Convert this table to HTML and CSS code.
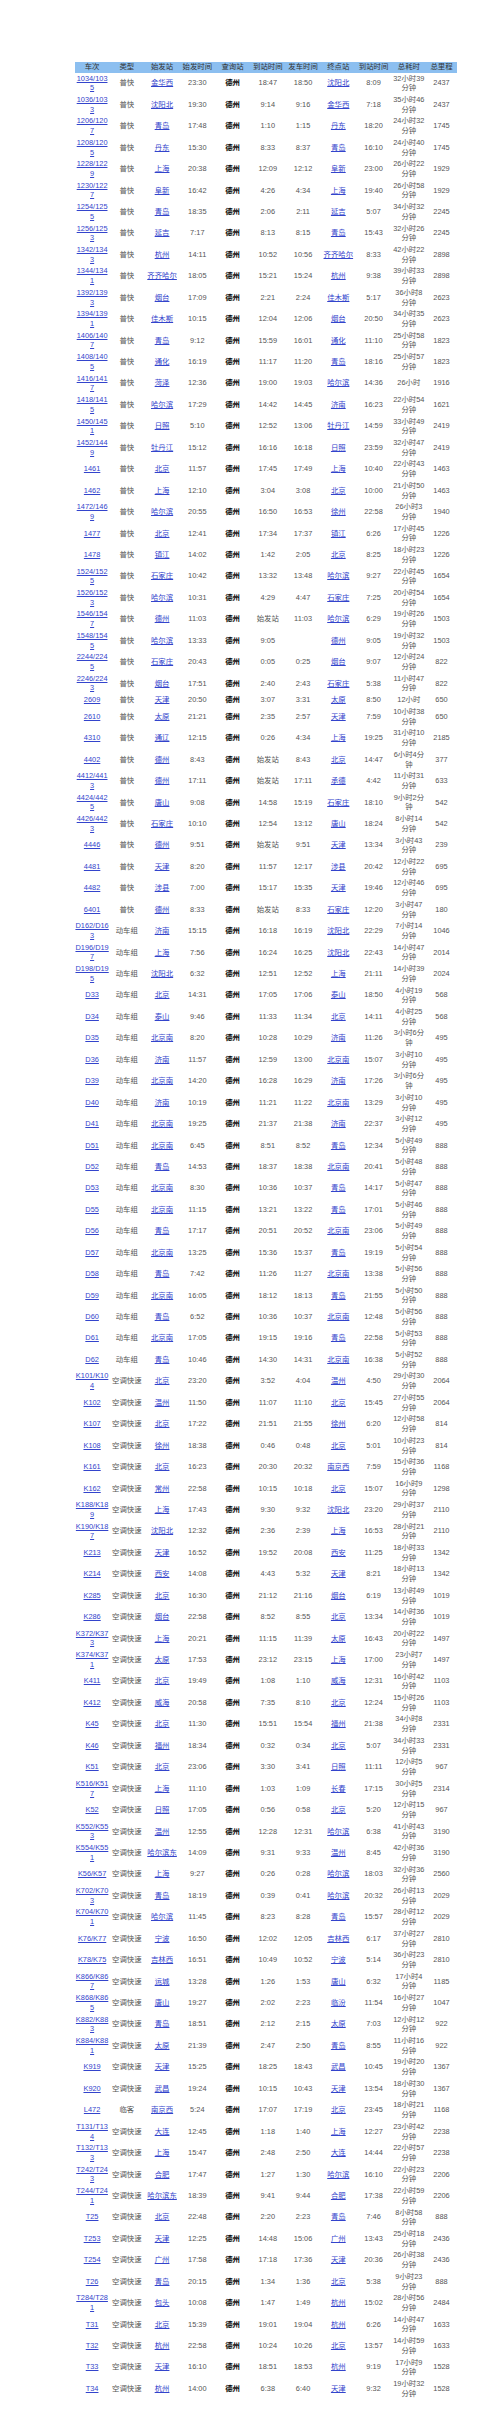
FILE: index.html
```html
<!DOCTYPE html>
<html lang="zh-CN">
<head>
<meta charset="utf-8">
<title>德州 经停列车</title>
<link rel="stylesheet" href="styles.css">
</head>
<body>
<table class="trains">
<colgroup>
<col class="c-no"><col class="c-std"><col class="c-std"><col class="c-std"><col class="c-std"><col class="c-std"><col class="c-std"><col class="c-std"><col class="c-std"><col class="c-dur"><col class="c-km">
</colgroup>
<thead>
<tr><th>车次</th><th>类型</th><th>始发站</th><th>始发时间</th><th>查询站</th><th>到站时间</th><th>发车时间</th><th>终点站</th><th>到站时间</th><th>总耗时</th><th>总里程</th></tr>
</thead>
<tbody>
<tr><td class="no"><a href="#">1034/1035</a></td><td>普快</td><td><a href="#">金华西</a></td><td>23:30</td><td class="q">德州</td><td>18:47</td><td>18:50</td><td><a href="#">沈阳北</a></td><td>8:09</td><td class="dur">32小时39分钟</td><td>2437</td></tr>
<tr><td class="no"><a href="#">1036/1033</a></td><td>普快</td><td><a href="#">沈阳北</a></td><td>19:30</td><td class="q">德州</td><td>9:14</td><td>9:16</td><td><a href="#">金华西</a></td><td>7:18</td><td class="dur">35小时46分钟</td><td>2437</td></tr>
<tr><td class="no"><a href="#">1206/1207</a></td><td>普快</td><td><a href="#">青岛</a></td><td>17:48</td><td class="q">德州</td><td>1:10</td><td>1:15</td><td><a href="#">丹东</a></td><td>18:20</td><td class="dur">24小时32分钟</td><td>1745</td></tr>
<tr><td class="no"><a href="#">1208/1205</a></td><td>普快</td><td><a href="#">丹东</a></td><td>15:30</td><td class="q">德州</td><td>8:33</td><td>8:37</td><td><a href="#">青岛</a></td><td>16:10</td><td class="dur">24小时40分钟</td><td>1745</td></tr>
<tr><td class="no"><a href="#">1228/1229</a></td><td>普快</td><td><a href="#">上海</a></td><td>20:38</td><td class="q">德州</td><td>12:09</td><td>12:12</td><td><a href="#">阜新</a></td><td>23:00</td><td class="dur">26小时22分钟</td><td>1929</td></tr>
<tr><td class="no"><a href="#">1230/1227</a></td><td>普快</td><td><a href="#">阜新</a></td><td>16:42</td><td class="q">德州</td><td>4:26</td><td>4:34</td><td><a href="#">上海</a></td><td>19:40</td><td class="dur">26小时58分钟</td><td>1929</td></tr>
<tr><td class="no"><a href="#">1254/1255</a></td><td>普快</td><td><a href="#">青岛</a></td><td>18:35</td><td class="q">德州</td><td>2:06</td><td>2:11</td><td><a href="#">延吉</a></td><td>5:07</td><td class="dur">34小时32分钟</td><td>2245</td></tr>
<tr><td class="no"><a href="#">1256/1253</a></td><td>普快</td><td><a href="#">延吉</a></td><td>7:17</td><td class="q">德州</td><td>8:13</td><td>8:15</td><td><a href="#">青岛</a></td><td>15:43</td><td class="dur">32小时26分钟</td><td>2245</td></tr>
<tr><td class="no"><a href="#">1342/1343</a></td><td>普快</td><td><a href="#">杭州</a></td><td>14:11</td><td class="q">德州</td><td>10:52</td><td>10:56</td><td><a href="#">齐齐哈尔</a></td><td>8:33</td><td class="dur">42小时22分钟</td><td>2898</td></tr>
<tr><td class="no"><a href="#">1344/1341</a></td><td>普快</td><td><a href="#">齐齐哈尔</a></td><td>18:05</td><td class="q">德州</td><td>15:21</td><td>15:24</td><td><a href="#">杭州</a></td><td>9:38</td><td class="dur">39小时33分钟</td><td>2898</td></tr>
<tr><td class="no"><a href="#">1392/1393</a></td><td>普快</td><td><a href="#">烟台</a></td><td>17:09</td><td class="q">德州</td><td>2:21</td><td>2:24</td><td><a href="#">佳木斯</a></td><td>5:17</td><td class="dur">36小时8分钟</td><td>2623</td></tr>
<tr><td class="no"><a href="#">1394/1391</a></td><td>普快</td><td><a href="#">佳木斯</a></td><td>10:15</td><td class="q">德州</td><td>12:04</td><td>12:06</td><td><a href="#">烟台</a></td><td>20:50</td><td class="dur">34小时35分钟</td><td>2623</td></tr>
<tr><td class="no"><a href="#">1406/1407</a></td><td>普快</td><td><a href="#">青岛</a></td><td>9:12</td><td class="q">德州</td><td>15:59</td><td>16:01</td><td><a href="#">通化</a></td><td>11:10</td><td class="dur">25小时58分钟</td><td>1823</td></tr>
<tr><td class="no"><a href="#">1408/1405</a></td><td>普快</td><td><a href="#">通化</a></td><td>16:19</td><td class="q">德州</td><td>11:17</td><td>11:20</td><td><a href="#">青岛</a></td><td>18:16</td><td class="dur">25小时57分钟</td><td>1823</td></tr>
<tr><td class="no"><a href="#">1416/1417</a></td><td>普快</td><td><a href="#">菏泽</a></td><td>12:36</td><td class="q">德州</td><td>19:00</td><td>19:03</td><td><a href="#">哈尔滨</a></td><td>14:36</td><td class="dur">26小时</td><td>1916</td></tr>
<tr><td class="no"><a href="#">1418/1415</a></td><td>普快</td><td><a href="#">哈尔滨</a></td><td>17:29</td><td class="q">德州</td><td>14:42</td><td>14:45</td><td><a href="#">济南</a></td><td>16:23</td><td class="dur">22小时54分钟</td><td>1621</td></tr>
<tr><td class="no"><a href="#">1450/1451</a></td><td>普快</td><td><a href="#">日照</a></td><td>5:10</td><td class="q">德州</td><td>12:52</td><td>13:06</td><td><a href="#">牡丹江</a></td><td>14:59</td><td class="dur">33小时49分钟</td><td>2419</td></tr>
<tr><td class="no"><a href="#">1452/1449</a></td><td>普快</td><td><a href="#">牡丹江</a></td><td>15:12</td><td class="q">德州</td><td>16:16</td><td>16:18</td><td><a href="#">日照</a></td><td>23:59</td><td class="dur">32小时47分钟</td><td>2419</td></tr>
<tr><td class="no"><a href="#">1461</a></td><td>普快</td><td><a href="#">北京</a></td><td>11:57</td><td class="q">德州</td><td>17:45</td><td>17:49</td><td><a href="#">上海</a></td><td>10:40</td><td class="dur">22小时43分钟</td><td>1463</td></tr>
<tr><td class="no"><a href="#">1462</a></td><td>普快</td><td><a href="#">上海</a></td><td>12:10</td><td class="q">德州</td><td>3:04</td><td>3:08</td><td><a href="#">北京</a></td><td>10:00</td><td class="dur">21小时50分钟</td><td>1463</td></tr>
<tr><td class="no"><a href="#">1472/1469</a></td><td>普快</td><td><a href="#">哈尔滨</a></td><td>20:55</td><td class="q">德州</td><td>16:50</td><td>16:53</td><td><a href="#">徐州</a></td><td>22:58</td><td class="dur">26小时3分钟</td><td>1940</td></tr>
<tr><td class="no"><a href="#">1477</a></td><td>普快</td><td><a href="#">北京</a></td><td>12:41</td><td class="q">德州</td><td>17:34</td><td>17:37</td><td><a href="#">镇江</a></td><td>6:26</td><td class="dur">17小时45分钟</td><td>1226</td></tr>
<tr><td class="no"><a href="#">1478</a></td><td>普快</td><td><a href="#">镇江</a></td><td>14:02</td><td class="q">德州</td><td>1:42</td><td>2:05</td><td><a href="#">北京</a></td><td>8:25</td><td class="dur">18小时23分钟</td><td>1226</td></tr>
<tr><td class="no"><a href="#">1524/1525</a></td><td>普快</td><td><a href="#">石家庄</a></td><td>10:42</td><td class="q">德州</td><td>13:32</td><td>13:48</td><td><a href="#">哈尔滨</a></td><td>9:27</td><td class="dur">22小时45分钟</td><td>1654</td></tr>
<tr><td class="no"><a href="#">1526/1523</a></td><td>普快</td><td><a href="#">哈尔滨</a></td><td>10:31</td><td class="q">德州</td><td>4:29</td><td>4:47</td><td><a href="#">石家庄</a></td><td>7:25</td><td class="dur">20小时54分钟</td><td>1654</td></tr>
<tr><td class="no"><a href="#">1546/1547</a></td><td>普快</td><td><a href="#">德州</a></td><td>11:03</td><td class="q">德州</td><td>始发站</td><td>11:03</td><td><a href="#">哈尔滨</a></td><td>6:29</td><td class="dur">19小时26分钟</td><td>1503</td></tr>
<tr><td class="no"><a href="#">1548/1545</a></td><td>普快</td><td><a href="#">哈尔滨</a></td><td>13:33</td><td class="q">德州</td><td>9:05</td><td></td><td><a href="#">德州</a></td><td>9:05</td><td class="dur">19小时32分钟</td><td>1503</td></tr>
<tr><td class="no"><a href="#">2244/2245</a></td><td>普快</td><td><a href="#">石家庄</a></td><td>20:43</td><td class="q">德州</td><td>0:05</td><td>0:25</td><td><a href="#">烟台</a></td><td>9:07</td><td class="dur">12小时24分钟</td><td>822</td></tr>
<tr><td class="no"><a href="#">2246/2243</a></td><td>普快</td><td><a href="#">烟台</a></td><td>17:51</td><td class="q">德州</td><td>2:40</td><td>2:43</td><td><a href="#">石家庄</a></td><td>5:38</td><td class="dur">11小时47分钟</td><td>822</td></tr>
<tr><td class="no"><a href="#">2609</a></td><td>普快</td><td><a href="#">天津</a></td><td>20:50</td><td class="q">德州</td><td>3:07</td><td>3:31</td><td><a href="#">太原</a></td><td>8:50</td><td class="dur">12小时</td><td>650</td></tr>
<tr><td class="no"><a href="#">2610</a></td><td>普快</td><td><a href="#">太原</a></td><td>21:21</td><td class="q">德州</td><td>2:35</td><td>2:57</td><td><a href="#">天津</a></td><td>7:59</td><td class="dur">10小时38分钟</td><td>650</td></tr>
<tr><td class="no"><a href="#">4310</a></td><td>普快</td><td><a href="#">通辽</a></td><td>12:15</td><td class="q">德州</td><td>0:26</td><td>4:34</td><td><a href="#">上海</a></td><td>19:25</td><td class="dur">31小时10分钟</td><td>2185</td></tr>
<tr><td class="no"><a href="#">4402</a></td><td>普快</td><td><a href="#">德州</a></td><td>8:43</td><td class="q">德州</td><td>始发站</td><td>8:43</td><td><a href="#">北京</a></td><td>14:47</td><td class="dur">6小时4分钟</td><td>377</td></tr>
<tr><td class="no"><a href="#">4412/4413</a></td><td>普快</td><td><a href="#">德州</a></td><td>17:11</td><td class="q">德州</td><td>始发站</td><td>17:11</td><td><a href="#">承德</a></td><td>4:42</td><td class="dur">11小时31分钟</td><td>633</td></tr>
<tr><td class="no"><a href="#">4424/4425</a></td><td>普快</td><td><a href="#">唐山</a></td><td>9:08</td><td class="q">德州</td><td>14:58</td><td>15:19</td><td><a href="#">石家庄</a></td><td>18:10</td><td class="dur">9小时2分钟</td><td>542</td></tr>
<tr><td class="no"><a href="#">4426/4423</a></td><td>普快</td><td><a href="#">石家庄</a></td><td>10:10</td><td class="q">德州</td><td>12:54</td><td>13:12</td><td><a href="#">唐山</a></td><td>18:24</td><td class="dur">8小时14分钟</td><td>542</td></tr>
<tr><td class="no"><a href="#">4446</a></td><td>普快</td><td><a href="#">德州</a></td><td>9:51</td><td class="q">德州</td><td>始发站</td><td>9:51</td><td><a href="#">天津</a></td><td>13:34</td><td class="dur">3小时43分钟</td><td>239</td></tr>
<tr><td class="no"><a href="#">4481</a></td><td>普快</td><td><a href="#">天津</a></td><td>8:20</td><td class="q">德州</td><td>11:57</td><td>12:17</td><td><a href="#">涉县</a></td><td>20:42</td><td class="dur">12小时22分钟</td><td>695</td></tr>
<tr><td class="no"><a href="#">4482</a></td><td>普快</td><td><a href="#">涉县</a></td><td>7:00</td><td class="q">德州</td><td>15:17</td><td>15:35</td><td><a href="#">天津</a></td><td>19:46</td><td class="dur">12小时46分钟</td><td>695</td></tr>
<tr><td class="no"><a href="#">6401</a></td><td>普快</td><td><a href="#">德州</a></td><td>8:33</td><td class="q">德州</td><td>始发站</td><td>8:33</td><td><a href="#">石家庄</a></td><td>12:20</td><td class="dur">3小时47分钟</td><td>180</td></tr>
<tr><td class="no"><a href="#">D162/D163</a></td><td>动车组</td><td><a href="#">济南</a></td><td>15:15</td><td class="q">德州</td><td>16:18</td><td>16:19</td><td><a href="#">沈阳北</a></td><td>22:29</td><td class="dur">7小时14分钟</td><td>1046</td></tr>
<tr><td class="no"><a href="#">D196/D197</a></td><td>动车组</td><td><a href="#">上海</a></td><td>7:56</td><td class="q">德州</td><td>16:24</td><td>16:25</td><td><a href="#">沈阳北</a></td><td>22:43</td><td class="dur">14小时47分钟</td><td>2014</td></tr>
<tr><td class="no"><a href="#">D198/D195</a></td><td>动车组</td><td><a href="#">沈阳北</a></td><td>6:32</td><td class="q">德州</td><td>12:51</td><td>12:52</td><td><a href="#">上海</a></td><td>21:11</td><td class="dur">14小时39分钟</td><td>2024</td></tr>
<tr><td class="no"><a href="#">D33</a></td><td>动车组</td><td><a href="#">北京</a></td><td>14:31</td><td class="q">德州</td><td>17:05</td><td>17:06</td><td><a href="#">泰山</a></td><td>18:50</td><td class="dur">4小时19分钟</td><td>568</td></tr>
<tr><td class="no"><a href="#">D34</a></td><td>动车组</td><td><a href="#">泰山</a></td><td>9:46</td><td class="q">德州</td><td>11:33</td><td>11:34</td><td><a href="#">北京</a></td><td>14:11</td><td class="dur">4小时25分钟</td><td>568</td></tr>
<tr><td class="no"><a href="#">D35</a></td><td>动车组</td><td><a href="#">北京南</a></td><td>8:20</td><td class="q">德州</td><td>10:28</td><td>10:29</td><td><a href="#">济南</a></td><td>11:26</td><td class="dur">3小时6分钟</td><td>495</td></tr>
<tr><td class="no"><a href="#">D36</a></td><td>动车组</td><td><a href="#">济南</a></td><td>11:57</td><td class="q">德州</td><td>12:59</td><td>13:00</td><td><a href="#">北京南</a></td><td>15:07</td><td class="dur">3小时10分钟</td><td>495</td></tr>
<tr><td class="no"><a href="#">D39</a></td><td>动车组</td><td><a href="#">北京南</a></td><td>14:20</td><td class="q">德州</td><td>16:28</td><td>16:29</td><td><a href="#">济南</a></td><td>17:26</td><td class="dur">3小时6分钟</td><td>495</td></tr>
<tr><td class="no"><a href="#">D40</a></td><td>动车组</td><td><a href="#">济南</a></td><td>10:19</td><td class="q">德州</td><td>11:21</td><td>11:22</td><td><a href="#">北京南</a></td><td>13:29</td><td class="dur">3小时10分钟</td><td>495</td></tr>
<tr><td class="no"><a href="#">D41</a></td><td>动车组</td><td><a href="#">北京南</a></td><td>19:25</td><td class="q">德州</td><td>21:37</td><td>21:38</td><td><a href="#">济南</a></td><td>22:37</td><td class="dur">3小时12分钟</td><td>495</td></tr>
<tr><td class="no"><a href="#">D51</a></td><td>动车组</td><td><a href="#">北京南</a></td><td>6:45</td><td class="q">德州</td><td>8:51</td><td>8:52</td><td><a href="#">青岛</a></td><td>12:34</td><td class="dur">5小时49分钟</td><td>888</td></tr>
<tr><td class="no"><a href="#">D52</a></td><td>动车组</td><td><a href="#">青岛</a></td><td>14:53</td><td class="q">德州</td><td>18:37</td><td>18:38</td><td><a href="#">北京南</a></td><td>20:41</td><td class="dur">5小时48分钟</td><td>888</td></tr>
<tr><td class="no"><a href="#">D53</a></td><td>动车组</td><td><a href="#">北京南</a></td><td>8:30</td><td class="q">德州</td><td>10:36</td><td>10:37</td><td><a href="#">青岛</a></td><td>14:17</td><td class="dur">5小时47分钟</td><td>888</td></tr>
<tr><td class="no"><a href="#">D55</a></td><td>动车组</td><td><a href="#">北京南</a></td><td>11:15</td><td class="q">德州</td><td>13:21</td><td>13:22</td><td><a href="#">青岛</a></td><td>17:01</td><td class="dur">5小时46分钟</td><td>888</td></tr>
<tr><td class="no"><a href="#">D56</a></td><td>动车组</td><td><a href="#">青岛</a></td><td>17:17</td><td class="q">德州</td><td>20:51</td><td>20:52</td><td><a href="#">北京南</a></td><td>23:06</td><td class="dur">5小时49分钟</td><td>888</td></tr>
<tr><td class="no"><a href="#">D57</a></td><td>动车组</td><td><a href="#">北京南</a></td><td>13:25</td><td class="q">德州</td><td>15:36</td><td>15:37</td><td><a href="#">青岛</a></td><td>19:19</td><td class="dur">5小时54分钟</td><td>888</td></tr>
<tr><td class="no"><a href="#">D58</a></td><td>动车组</td><td><a href="#">青岛</a></td><td>7:42</td><td class="q">德州</td><td>11:26</td><td>11:27</td><td><a href="#">北京南</a></td><td>13:38</td><td class="dur">5小时56分钟</td><td>888</td></tr>
<tr><td class="no"><a href="#">D59</a></td><td>动车组</td><td><a href="#">北京南</a></td><td>16:05</td><td class="q">德州</td><td>18:12</td><td>18:13</td><td><a href="#">青岛</a></td><td>21:55</td><td class="dur">5小时50分钟</td><td>888</td></tr>
<tr><td class="no"><a href="#">D60</a></td><td>动车组</td><td><a href="#">青岛</a></td><td>6:52</td><td class="q">德州</td><td>10:36</td><td>10:37</td><td><a href="#">北京南</a></td><td>12:48</td><td class="dur">5小时56分钟</td><td>888</td></tr>
<tr><td class="no"><a href="#">D61</a></td><td>动车组</td><td><a href="#">北京南</a></td><td>17:05</td><td class="q">德州</td><td>19:15</td><td>19:16</td><td><a href="#">青岛</a></td><td>22:58</td><td class="dur">5小时53分钟</td><td>888</td></tr>
<tr><td class="no"><a href="#">D62</a></td><td>动车组</td><td><a href="#">青岛</a></td><td>10:46</td><td class="q">德州</td><td>14:30</td><td>14:31</td><td><a href="#">北京南</a></td><td>16:38</td><td class="dur">5小时52分钟</td><td>888</td></tr>
<tr><td class="no"><a href="#">K101/K104</a></td><td>空调快速</td><td><a href="#">北京</a></td><td>23:20</td><td class="q">德州</td><td>3:52</td><td>4:04</td><td><a href="#">温州</a></td><td>4:50</td><td class="dur">29小时30分钟</td><td>2064</td></tr>
<tr><td class="no"><a href="#">K102</a></td><td>空调快速</td><td><a href="#">温州</a></td><td>11:50</td><td class="q">德州</td><td>11:07</td><td>11:10</td><td><a href="#">北京</a></td><td>15:45</td><td class="dur">27小时55分钟</td><td>2064</td></tr>
<tr><td class="no"><a href="#">K107</a></td><td>空调快速</td><td><a href="#">北京</a></td><td>17:22</td><td class="q">德州</td><td>21:51</td><td>21:55</td><td><a href="#">徐州</a></td><td>6:20</td><td class="dur">12小时58分钟</td><td>814</td></tr>
<tr><td class="no"><a href="#">K108</a></td><td>空调快速</td><td><a href="#">徐州</a></td><td>18:38</td><td class="q">德州</td><td>0:46</td><td>0:48</td><td><a href="#">北京</a></td><td>5:01</td><td class="dur">10小时23分钟</td><td>814</td></tr>
<tr><td class="no"><a href="#">K161</a></td><td>空调快速</td><td><a href="#">北京</a></td><td>16:23</td><td class="q">德州</td><td>20:30</td><td>20:32</td><td><a href="#">南京西</a></td><td>7:59</td><td class="dur">15小时36分钟</td><td>1168</td></tr>
<tr><td class="no"><a href="#">K162</a></td><td>空调快速</td><td><a href="#">常州</a></td><td>22:58</td><td class="q">德州</td><td>10:15</td><td>10:18</td><td><a href="#">北京</a></td><td>15:07</td><td class="dur">16小时9分钟</td><td>1298</td></tr>
<tr><td class="no"><a href="#">K188/K189</a></td><td>空调快速</td><td><a href="#">上海</a></td><td>17:43</td><td class="q">德州</td><td>9:30</td><td>9:32</td><td><a href="#">沈阳北</a></td><td>23:20</td><td class="dur">29小时37分钟</td><td>2110</td></tr>
<tr><td class="no"><a href="#">K190/K187</a></td><td>空调快速</td><td><a href="#">沈阳北</a></td><td>12:32</td><td class="q">德州</td><td>2:36</td><td>2:39</td><td><a href="#">上海</a></td><td>16:53</td><td class="dur">28小时21分钟</td><td>2110</td></tr>
<tr><td class="no"><a href="#">K213</a></td><td>空调快速</td><td><a href="#">天津</a></td><td>16:52</td><td class="q">德州</td><td>19:52</td><td>20:08</td><td><a href="#">西安</a></td><td>11:25</td><td class="dur">18小时33分钟</td><td>1342</td></tr>
<tr><td class="no"><a href="#">K214</a></td><td>空调快速</td><td><a href="#">西安</a></td><td>14:08</td><td class="q">德州</td><td>4:43</td><td>5:32</td><td><a href="#">天津</a></td><td>8:21</td><td class="dur">18小时13分钟</td><td>1342</td></tr>
<tr><td class="no"><a href="#">K285</a></td><td>空调快速</td><td><a href="#">北京</a></td><td>16:30</td><td class="q">德州</td><td>21:12</td><td>21:16</td><td><a href="#">烟台</a></td><td>6:19</td><td class="dur">13小时49分钟</td><td>1019</td></tr>
<tr><td class="no"><a href="#">K286</a></td><td>空调快速</td><td><a href="#">烟台</a></td><td>22:58</td><td class="q">德州</td><td>8:52</td><td>8:55</td><td><a href="#">北京</a></td><td>13:34</td><td class="dur">14小时36分钟</td><td>1019</td></tr>
<tr><td class="no"><a href="#">K372/K373</a></td><td>空调快速</td><td><a href="#">上海</a></td><td>20:21</td><td class="q">德州</td><td>11:15</td><td>11:39</td><td><a href="#">太原</a></td><td>16:43</td><td class="dur">20小时22分钟</td><td>1497</td></tr>
<tr><td class="no"><a href="#">K374/K371</a></td><td>空调快速</td><td><a href="#">太原</a></td><td>17:53</td><td class="q">德州</td><td>23:12</td><td>23:15</td><td><a href="#">上海</a></td><td>17:00</td><td class="dur">23小时7分钟</td><td>1497</td></tr>
<tr><td class="no"><a href="#">K411</a></td><td>空调快速</td><td><a href="#">北京</a></td><td>19:49</td><td class="q">德州</td><td>1:08</td><td>1:10</td><td><a href="#">威海</a></td><td>12:31</td><td class="dur">16小时42分钟</td><td>1103</td></tr>
<tr><td class="no"><a href="#">K412</a></td><td>空调快速</td><td><a href="#">威海</a></td><td>20:58</td><td class="q">德州</td><td>7:35</td><td>8:10</td><td><a href="#">北京</a></td><td>12:24</td><td class="dur">15小时26分钟</td><td>1103</td></tr>
<tr><td class="no"><a href="#">K45</a></td><td>空调快速</td><td><a href="#">北京</a></td><td>11:30</td><td class="q">德州</td><td>15:51</td><td>15:54</td><td><a href="#">福州</a></td><td>21:38</td><td class="dur">34小时8分钟</td><td>2331</td></tr>
<tr><td class="no"><a href="#">K46</a></td><td>空调快速</td><td><a href="#">福州</a></td><td>18:34</td><td class="q">德州</td><td>0:32</td><td>0:34</td><td><a href="#">北京</a></td><td>5:07</td><td class="dur">34小时33分钟</td><td>2331</td></tr>
<tr><td class="no"><a href="#">K51</a></td><td>空调快速</td><td><a href="#">北京</a></td><td>23:06</td><td class="q">德州</td><td>3:30</td><td>3:41</td><td><a href="#">日照</a></td><td>11:11</td><td class="dur">12小时5分钟</td><td>967</td></tr>
<tr><td class="no"><a href="#">K516/K517</a></td><td>空调快速</td><td><a href="#">上海</a></td><td>11:10</td><td class="q">德州</td><td>1:03</td><td>1:09</td><td><a href="#">长春</a></td><td>17:15</td><td class="dur">30小时5分钟</td><td>2314</td></tr>
<tr><td class="no"><a href="#">K52</a></td><td>空调快速</td><td><a href="#">日照</a></td><td>17:05</td><td class="q">德州</td><td>0:56</td><td>0:58</td><td><a href="#">北京</a></td><td>5:20</td><td class="dur">12小时15分钟</td><td>967</td></tr>
<tr><td class="no"><a href="#">K552/K553</a></td><td>空调快速</td><td><a href="#">温州</a></td><td>12:55</td><td class="q">德州</td><td>12:28</td><td>12:31</td><td><a href="#">哈尔滨</a></td><td>6:38</td><td class="dur">41小时43分钟</td><td>3190</td></tr>
<tr><td class="no"><a href="#">K554/K551</a></td><td>空调快速</td><td><a href="#">哈尔滨东</a></td><td>14:09</td><td class="q">德州</td><td>9:31</td><td>9:33</td><td><a href="#">温州</a></td><td>8:45</td><td class="dur">42小时36分钟</td><td>3190</td></tr>
<tr><td class="no"><a href="#">K56/K57</a></td><td>空调快速</td><td><a href="#">上海</a></td><td>9:27</td><td class="q">德州</td><td>0:26</td><td>0:28</td><td><a href="#">哈尔滨</a></td><td>18:03</td><td class="dur">32小时36分钟</td><td>2560</td></tr>
<tr><td class="no"><a href="#">K702/K703</a></td><td>空调快速</td><td><a href="#">青岛</a></td><td>18:19</td><td class="q">德州</td><td>0:39</td><td>0:41</td><td><a href="#">哈尔滨</a></td><td>20:32</td><td class="dur">26小时13分钟</td><td>2029</td></tr>
<tr><td class="no"><a href="#">K704/K701</a></td><td>空调快速</td><td><a href="#">哈尔滨</a></td><td>11:45</td><td class="q">德州</td><td>8:23</td><td>8:28</td><td><a href="#">青岛</a></td><td>15:57</td><td class="dur">28小时12分钟</td><td>2029</td></tr>
<tr><td class="no"><a href="#">K76/K77</a></td><td>空调快速</td><td><a href="#">宁波</a></td><td>16:50</td><td class="q">德州</td><td>12:02</td><td>12:05</td><td><a href="#">吉林西</a></td><td>6:17</td><td class="dur">37小时27分钟</td><td>2810</td></tr>
<tr><td class="no"><a href="#">K78/K75</a></td><td>空调快速</td><td><a href="#">吉林西</a></td><td>16:51</td><td class="q">德州</td><td>10:49</td><td>10:52</td><td><a href="#">宁波</a></td><td>5:14</td><td class="dur">36小时23分钟</td><td>2810</td></tr>
<tr><td class="no"><a href="#">K866/K867</a></td><td>空调快速</td><td><a href="#">运城</a></td><td>13:28</td><td class="q">德州</td><td>1:26</td><td>1:53</td><td><a href="#">唐山</a></td><td>6:32</td><td class="dur">17小时4分钟</td><td>1185</td></tr>
<tr><td class="no"><a href="#">K868/K865</a></td><td>空调快速</td><td><a href="#">唐山</a></td><td>19:27</td><td class="q">德州</td><td>2:02</td><td>2:23</td><td><a href="#">临汾</a></td><td>11:54</td><td class="dur">16小时27分钟</td><td>1047</td></tr>
<tr><td class="no"><a href="#">K882/K883</a></td><td>空调快速</td><td><a href="#">青岛</a></td><td>18:51</td><td class="q">德州</td><td>2:12</td><td>2:15</td><td><a href="#">太原</a></td><td>7:03</td><td class="dur">12小时12分钟</td><td>922</td></tr>
<tr><td class="no"><a href="#">K884/K881</a></td><td>空调快速</td><td><a href="#">太原</a></td><td>21:39</td><td class="q">德州</td><td>2:47</td><td>2:50</td><td><a href="#">青岛</a></td><td>8:55</td><td class="dur">11小时16分钟</td><td>922</td></tr>
<tr><td class="no"><a href="#">K919</a></td><td>空调快速</td><td><a href="#">天津</a></td><td>15:25</td><td class="q">德州</td><td>18:25</td><td>18:43</td><td><a href="#">武昌</a></td><td>10:45</td><td class="dur">19小时20分钟</td><td>1367</td></tr>
<tr><td class="no"><a href="#">K920</a></td><td>空调快速</td><td><a href="#">武昌</a></td><td>19:24</td><td class="q">德州</td><td>10:15</td><td>10:43</td><td><a href="#">天津</a></td><td>13:54</td><td class="dur">18小时30分钟</td><td>1367</td></tr>
<tr><td class="no"><a href="#">L472</a></td><td>临客</td><td><a href="#">南京西</a></td><td>5:24</td><td class="q">德州</td><td>17:07</td><td>17:19</td><td><a href="#">北京</a></td><td>23:45</td><td class="dur">18小时21分钟</td><td>1168</td></tr>
<tr><td class="no"><a href="#">T131/T134</a></td><td>空调快速</td><td><a href="#">大连</a></td><td>12:45</td><td class="q">德州</td><td>1:18</td><td>1:40</td><td><a href="#">上海</a></td><td>12:27</td><td class="dur">23小时42分钟</td><td>2238</td></tr>
<tr><td class="no"><a href="#">T132/T133</a></td><td>空调快速</td><td><a href="#">上海</a></td><td>15:47</td><td class="q">德州</td><td>2:48</td><td>2:50</td><td><a href="#">大连</a></td><td>14:44</td><td class="dur">22小时57分钟</td><td>2238</td></tr>
<tr><td class="no"><a href="#">T242/T243</a></td><td>空调快速</td><td><a href="#">合肥</a></td><td>17:47</td><td class="q">德州</td><td>1:27</td><td>1:30</td><td><a href="#">哈尔滨</a></td><td>16:10</td><td class="dur">22小时23分钟</td><td>2206</td></tr>
<tr><td class="no"><a href="#">T244/T241</a></td><td>空调快速</td><td><a href="#">哈尔滨东</a></td><td>18:39</td><td class="q">德州</td><td>9:41</td><td>9:44</td><td><a href="#">合肥</a></td><td>17:38</td><td class="dur">22小时59分钟</td><td>2206</td></tr>
<tr><td class="no"><a href="#">T25</a></td><td>空调快速</td><td><a href="#">北京</a></td><td>22:48</td><td class="q">德州</td><td>2:20</td><td>2:23</td><td><a href="#">青岛</a></td><td>7:46</td><td class="dur">8小时58分钟</td><td>888</td></tr>
<tr><td class="no"><a href="#">T253</a></td><td>空调快速</td><td><a href="#">天津</a></td><td>12:25</td><td class="q">德州</td><td>14:48</td><td>15:06</td><td><a href="#">广州</a></td><td>13:43</td><td class="dur">25小时18分钟</td><td>2436</td></tr>
<tr><td class="no"><a href="#">T254</a></td><td>空调快速</td><td><a href="#">广州</a></td><td>17:58</td><td class="q">德州</td><td>17:18</td><td>17:36</td><td><a href="#">天津</a></td><td>20:36</td><td class="dur">26小时38分钟</td><td>2436</td></tr>
<tr><td class="no"><a href="#">T26</a></td><td>空调快速</td><td><a href="#">青岛</a></td><td>20:15</td><td class="q">德州</td><td>1:34</td><td>1:36</td><td><a href="#">北京</a></td><td>5:38</td><td class="dur">9小时23分钟</td><td>888</td></tr>
<tr><td class="no"><a href="#">T284/T281</a></td><td>空调快速</td><td><a href="#">包头</a></td><td>10:08</td><td class="q">德州</td><td>1:47</td><td>1:49</td><td><a href="#">杭州</a></td><td>15:02</td><td class="dur">28小时56分钟</td><td>2484</td></tr>
<tr><td class="no"><a href="#">T31</a></td><td>空调快速</td><td><a href="#">北京</a></td><td>15:39</td><td class="q">德州</td><td>19:01</td><td>19:04</td><td><a href="#">杭州</a></td><td>6:26</td><td class="dur">14小时47分钟</td><td>1633</td></tr>
<tr><td class="no"><a href="#">T32</a></td><td>空调快速</td><td><a href="#">杭州</a></td><td>22:58</td><td class="q">德州</td><td>10:24</td><td>10:26</td><td><a href="#">北京</a></td><td>13:57</td><td class="dur">14小时59分钟</td><td>1633</td></tr>
<tr><td class="no"><a href="#">T33</a></td><td>空调快速</td><td><a href="#">天津</a></td><td>16:10</td><td class="q">德州</td><td>18:51</td><td>18:53</td><td><a href="#">杭州</a></td><td>9:19</td><td class="dur">17小时9分钟</td><td>1528</td></tr>
<tr><td class="no"><a href="#">T34</a></td><td>空调快速</td><td><a href="#">杭州</a></td><td>14:00</td><td class="q">德州</td><td>6:38</td><td>6:40</td><td><a href="#">天津</a></td><td>9:32</td><td class="dur">19小时32分钟</td><td>1528</td></tr>
</tbody>
</table>
</body>
</html>
```
FILE: styles.css
```css
html {
  background: #ffffff;
}

body {
  margin: 0;
  background: #ffffff;
  font-family: "Liberation Sans", "Noto Sans CJK SC", sans-serif;
  font-size: 7.4px;
  color: #555555;
}

.trains {
  margin: 62px 0 0 75px;
  border-collapse: collapse;
  border-spacing: 0;
  table-layout: fixed;
  width: 381.5px;
}

.c-no {
  width: 34.2px;
}

.c-std {
  width: 35.25px;
}

.c-dur {
  width: 35.3px;
}

.c-km {
  width: 30px;
}

.trains th {
  background: #8cbff0;
  color: #333333;
  font-weight: normal;
  line-height: 10.5px;
  padding: 0;
  text-align: center;
  white-space: nowrap;
}

.trains td {
  padding: 1px 0;
  line-height: 9.72px;
  text-align: center;
  vertical-align: middle;
}

.trains td.no {
  word-break: break-all;
}

.trains td.dur {
  padding: 1px 1.2px;
}

.trains td.q {
  font-weight: bold;
  color: #000000;
}

.trains a {
  color: #3344cc;
  text-decoration: underline;
}
```
